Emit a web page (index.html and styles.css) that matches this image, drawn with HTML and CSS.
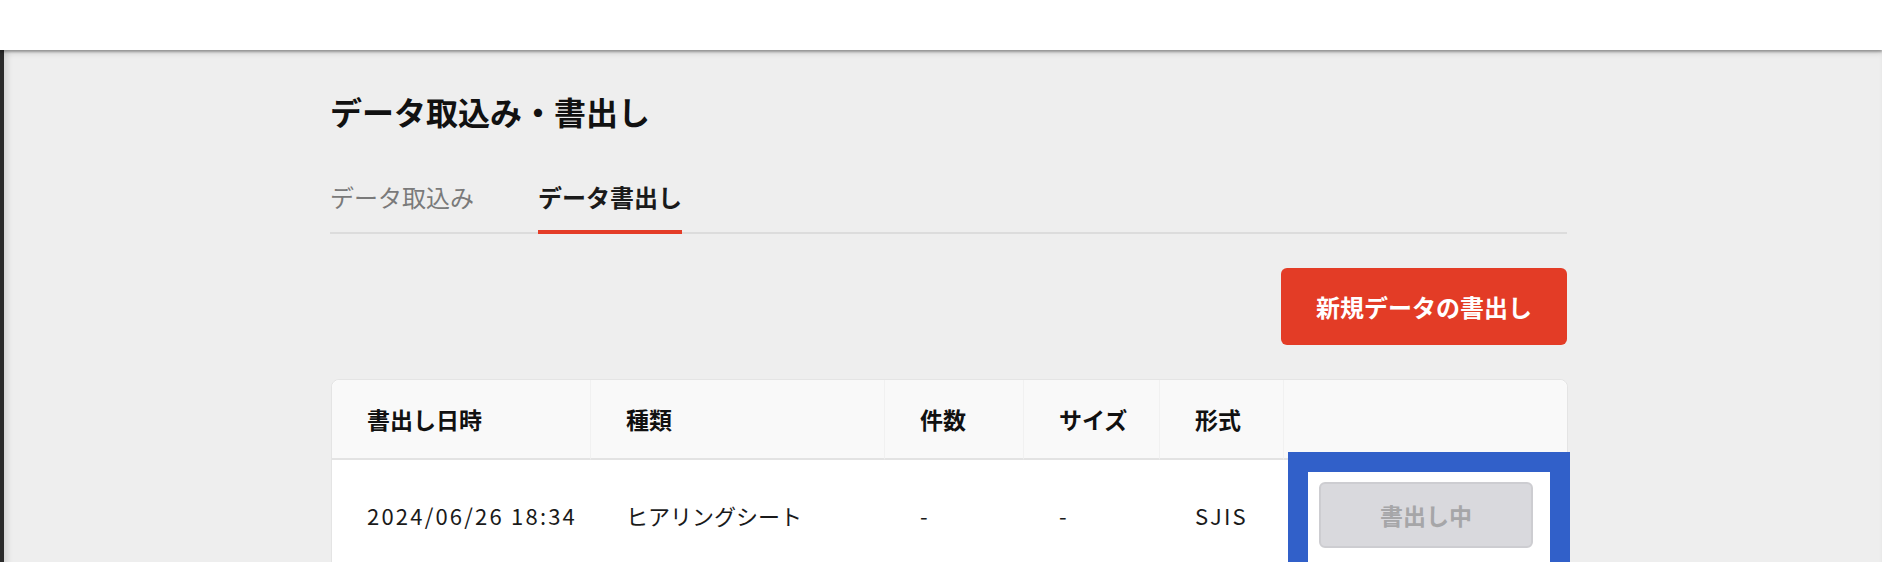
FILE: index.html
```html
<!DOCTYPE html>
<html lang="ja">
<head>
    <meta charset="UTF-8">
    <meta name="viewport" content="width=device-width, initial-scale=1.0">
    <title>データ取込み・書出し</title>
    <link rel="stylesheet" href="styles.css">
</head>
<body>
    <!-- Top bar -->
    <header class="topbar"></header>

    <main class="page">
        <div class="container">
            <h1 class="page-title">データ取込み・書出し</h1>

            <!-- Tabs -->
            <nav class="tabs">
                <a class="tab" href="#">データ取込み</a>
                <a class="tab active" href="#">データ書出し</a>
            </nav>

            <div class="actions">
                <button class="btn-primary" type="button">新規データの書出し</button>
            </div>

            <!-- Export list -->
            <div class="card">
                <div class="table">
                    <div class="th">書出し日時</div>
                    <div class="th">種類</div>
                    <div class="th">件数</div>
                    <div class="th">サイズ</div>
                    <div class="th">形式</div>
                    <div class="th"></div>

                    <div class="td latin">2024/06/26 18:34</div>
                    <div class="td">ヒアリングシート</div>
                    <div class="td">-</div>
                    <div class="td">-</div>
                    <div class="td latin">SJIS</div>
                    <div class="td"><button class="btn-disabled" type="button" disabled>書出し中</button></div>
                </div>
                <div class="highlight"></div>
            </div>
        </div>
    </main>
</body>
</html>
```

FILE: styles.css
```css
body {
    margin: 0;
    padding: 0;
    background-color: #eeeeee;
    font-family: "Noto Sans CJK JP", "Noto Sans", sans-serif;
    color: #1a1a1a;
    overflow: hidden;
}
.topbar {
    height: 50px;
    background-color: #fff;
    position: relative;
    z-index: 2;
    box-shadow: 0 2px 2px rgba(0, 0, 0, 0.28), 0 4px 6px rgba(0, 0, 0, 0.08);
}
.page {
    border-left: 4px solid #2b2b2b;
    box-shadow: inset 3px 0 6px rgba(0, 0, 0, 0.12);
    min-height: 520px;
    padding-top: 37px;
}
.container {
    margin-left: 326px;
    width: 1237px;
}
.page-title {
    margin: 0 0 44px;
    font-size: 32px;
    line-height: 48px;
    font-weight: 700;
    color: #111;
}
.tabs {
    display: flex;
    gap: 64px;
    border-bottom: 2px solid #dcdcdc;
}
.tab {
    font-size: 24px;
    line-height: 36px;
    padding-bottom: 15px;
    border-bottom: 4px solid transparent;
    margin-bottom: -2px;
    color: #7a7a7a;
    text-decoration: none;
}
.tab.active {
    color: #1a1a1a;
    font-weight: 700;
    border-bottom-color: #e43d28;
}
.actions {
    display: flex;
    justify-content: flex-end;
    margin-top: 34px;
}
.btn-primary {
    width: 286px;
    height: 77px;
    background-color: #e33c26;
    color: #fff;
    border: none;
    border-radius: 6px;
    font-family: inherit;
    font-size: 24px;
    font-weight: 700;
}
.card {
    position: relative;
    margin-top: 34px;
    background-color: #fff;
    border: 1px solid #e4e4e4;
    border-radius: 8px;
    margin-left: 1px;
    width: 1235px;
}
.table {
    display: grid;
    grid-template-columns: 259px 294px 139px 136px 124px 1fr;
}
.th {
    height: 78px;
    display: flex;
    align-items: center;
    padding-left: 35px;
    background-color: #f9f9f9;
    border-bottom: 2px solid #e3e3e3;
    border-right: 1px solid #f1f1f1;
    font-size: 23px;
    font-weight: 700;
    color: #111;
}
.th:first-child {
    border-top-left-radius: 8px;
}
.th:nth-child(6) {
    border-right: none;
    border-top-right-radius: 8px;
}
.td {
    height: 110px;
    display: flex;
    align-items: center;
    padding-left: 35px;
    font-size: 22px;
    color: #1a1a1a;
}
.td.latin {
    letter-spacing: 0.1em;
}
.btn-disabled {
    width: 214px;
    height: 66px;
    background-color: #d9d9dd;
    border: 2px solid #cdcdd1;
    border-radius: 6px;
    color: #a6a6a8;
    font-family: inherit;
    font-size: 23px;
    font-weight: 700;
}
/* annotation box drawn over the action cell */
.highlight {
    position: absolute;
    left: 956px;
    top: 72px;
    width: 242px;
    height: 120px;
    border: 20px solid #3160c9;
}
```
